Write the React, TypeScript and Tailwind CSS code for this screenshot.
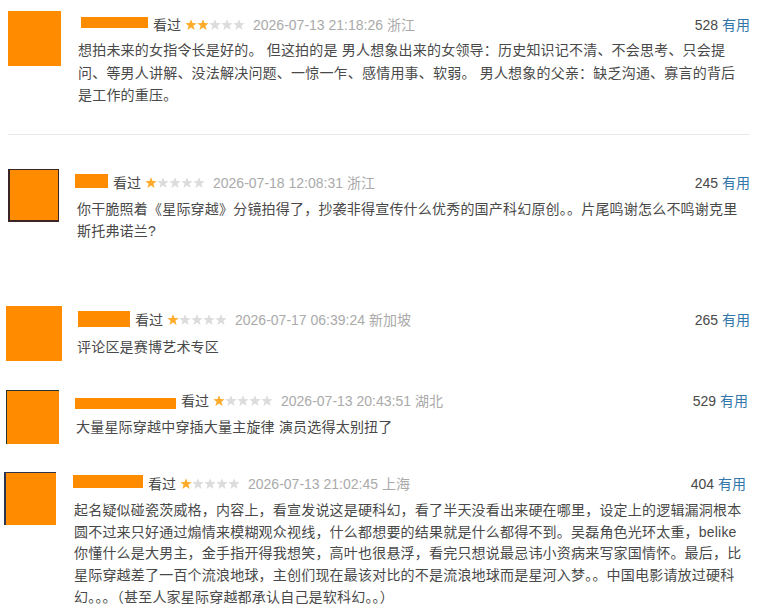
import React from "react";

type Review = {
    wrap: string;
    avatar: string;
    inner?: string;
    content: string;
    head: string;
    name: string;
    body: string;
    rating: number;
    time: string;
    loc: string;
    votes: number;
    text: string;
};

const reviews: Review[] = [
    {
        wrap: "mt-[11px]",
        avatar: "ml-[8px] w-[53px] h-[55px] bg-[#ff8c00]",
        content: "ml-[17px] mr-[10px]",
        head: "mt-[4px]",
        name: "ml-[3px] mt-[2px] w-[67px] h-[11px]",
        body: "mt-[4px] leading-[22.5px]",
        rating: 2,
        time: "2026-07-13 21:18:26",
        loc: "浙江",
        votes: 528,
        text: "想拍未来的女指令长是好的。 但这拍的是 男人想象出来的女领导：历史知识记不清、不会思考、只会提问、等男人讲解、没法解决问题、一惊一乍、感情用事、软弱。 男人想象的父亲：缺乏沟通、寡言的背后是工作的重压。",
    },
    {
        wrap: "mt-[34px]",
        avatar: "ml-[8px] w-[51px] h-[53px] bg-[#3a2426] pl-[2px] pr-[1px] pt-[1px] pb-[2px]",
        inner: "bg-[#ff8c00]",
        content: "ml-[18px] mr-[10px]",
        head: "mt-[4px]",
        name: "-ml-[2px] mt-[1px] w-[33px] h-[14px]",
        body: "mt-[5px] leading-[22.5px]",
        rating: 1,
        time: "2026-07-18 12:08:31",
        loc: "浙江",
        votes: 245,
        text: "你干脆照着《星际穿越》分镜拍得了，抄袭非得宣传什么优秀的国产科幻原创。。片尾鸣谢怎么不鸣谢克里斯托弗诺兰?",
    },
    {
        wrap: "mt-[63px]",
        avatar: "ml-[6px] w-[56px] h-[55px] bg-[#ff8c00]",
        content: "ml-[15px] mr-[10px]",
        head: "mt-[4px]",
        name: "ml-[1px] mt-[1px] w-[52px] h-[16px]",
        body: "mt-[6px] leading-[22.5px]",
        rating: 1,
        time: "2026-07-17 06:39:24",
        loc: "新加坡",
        votes: 265,
        text: "评论区是赛博艺术专区",
    },
    {
        wrap: "mt-[29px]",
        avatar: "ml-[6px] w-[53px] h-[54px] bg-[#24332b] pl-[1px] pt-[1px]",
        inner: "bg-[#ff8c00]",
        content: "ml-[17px] mr-[12px]",
        head: "mt-[1.5px]",
        name: "-ml-[1px] mt-[6.5px] w-[101px] h-[11px]",
        body: "mt-[5px] leading-[22.5px]",
        rating: 1,
        time: "2026-07-13 20:43:51",
        loc: "湖北",
        votes: 529,
        text: "大量星际穿越中穿插大量主旋律 演员选得太别扭了",
    },
    {
        wrap: "mt-[28px]",
        avatar: "ml-[4px] w-[52px] h-[53px] bg-[#2c3450] pl-[2px] pt-[1px]",
        inner: "bg-[#ff8c00]",
        content: "ml-[18px] mr-[14px]",
        head: "mt-[2.5px]",
        name: "-ml-[1px] mt-[0.5px] w-[70px] h-[13px]",
        body: "mt-[6px] leading-[21.7px]",
        rating: 1,
        time: "2026-07-13 21:02:45",
        loc: "上海",
        votes: 404,
        text: "起名疑似碰瓷茨威格，内容上，看宣发说这是硬科幻，看了半天没看出来硬在哪里，设定上的逻辑漏洞根本圆不过来只好通过煽情来模糊观众视线，什么都想要的结果就是什么都得不到。吴磊角色光环太重，belike你懂什么是大男主，金手指开得我想笑，高叶也很悬浮，看完只想说最忌讳小资病来写家国情怀。最后，比星际穿越差了一百个流浪地球，主创们现在最该对比的不是流浪地球而是星河入梦。。中国电影请放过硬科幻。。。（甚至人家星际穿越都承认自己是软科幻。。）",
    },
];

const STAR = "6,0.3 7.5,4 11.7,4.2 8.4,6.8 9.6,10.9 6,8.6 2.4,10.9 3.6,6.8 0.3,4.2 4.5,4";

function Stars({ n }: { n: number }) {
    return (
        <svg width="60" height="11" viewBox="0 0 60 11" className="shrink-0">
            {[0, 1, 2, 3, 4].map((i) => (
                <polygon
                    key={i}
                    points={STAR}
                    transform={`translate(${i * 12} 0)`}
                    fill={i < n ? "#ffac2d" : "#dcdcdc"}
                />
            ))}
        </svg>
    );
}

function Item({ r }: { r: Review }) {
    return (
        <div className={`flex items-start ${r.wrap}`}>
            <div className={`shrink-0 flex ${r.avatar}`}>
                {r.inner ? <div className={`flex-1 ${r.inner}`} /> : null}
            </div>

            <div className={`flex-1 min-w-0 ${r.content}`}>
                {/* meta line */}
                <div className={`flex items-start justify-between h-[20px] leading-[20px] text-[14px] ${r.head}`}>
                    <div className="flex items-start whitespace-nowrap">
                        <span className={`inline-block bg-[#ff8c00] shrink-0 ${r.name}`} />
                        <span className="ml-[5px] text-[#494949]">看过</span>
                        <span className="ml-[4px] mt-[4px]">
                            <Stars n={r.rating} />
                        </span>
                        <span className="ml-[8px] text-[#aaaaaa]">
                            {r.time} {r.loc}
                        </span>
                    </div>
                    <div className="whitespace-nowrap">
                        <span className="text-[#494949]">{r.votes}</span>{" "}
                        <span className="text-[#3377aa]">有用</span>
                    </div>
                </div>

                <p className={`w-[669.5px] text-[14px] tracking-[0.2px] text-[#494949] ${r.body}`}>
                    {r.text}
                </p>
            </div>
        </div>
    );
}

export default function App() {
    return (
        <div className="w-[760px] h-[607px] overflow-hidden bg-white font-['Liberation_Sans','Noto_Sans_CJK_SC',sans-serif]">
            <div className="flex flex-col">
                <Item r={reviews[0]} />
                <div className="mt-[27px] ml-[8px] mr-[10px] h-px bg-[#eaeaea]" />
                {reviews.slice(1).map((r, i) => (
                    <Item key={i} r={r} />
                ))}
            </div>
        </div>
    );
}
